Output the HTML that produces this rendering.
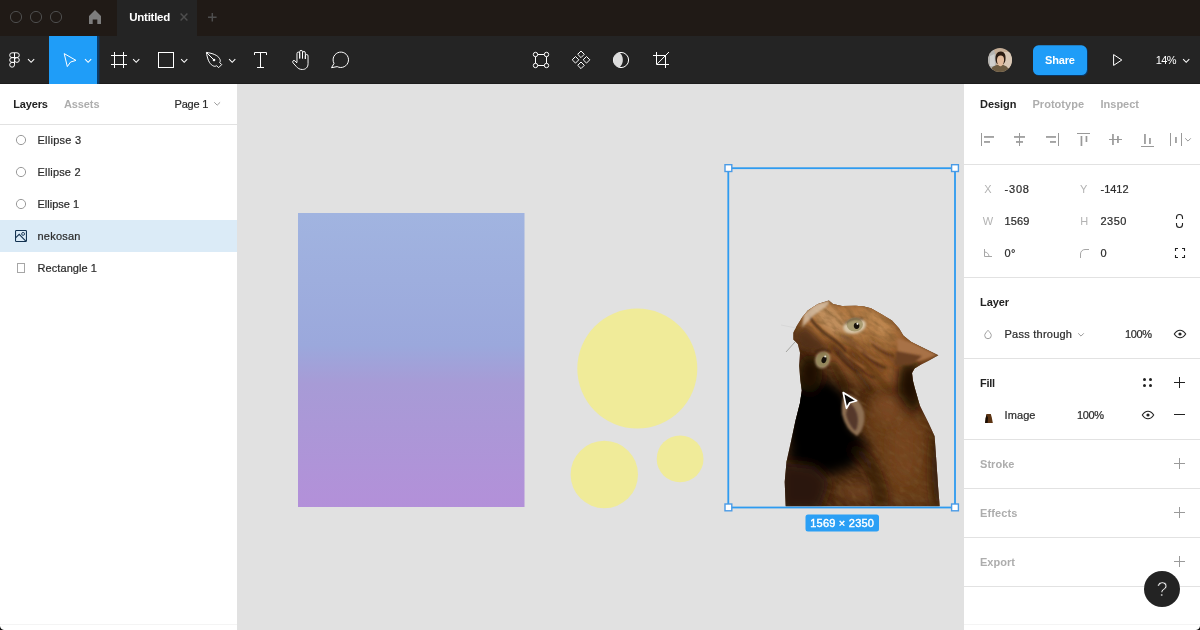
<!DOCTYPE html>
<html lang="en">
<head>
<meta charset="utf-8">
<title>Untitled – Figma</title>
<style>
*{box-sizing:border-box;margin:0;padding:0}
html,body{width:1200px;height:630px;overflow:hidden;background:#e1e1e1;font-family:"Liberation Sans",sans-serif;font-size:11px;color:#333}
body{position:relative}
.t{position:absolute;white-space:nowrap;line-height:16px;height:16px}
#txt{position:absolute;left:0;top:0;width:1200px;height:630px;will-change:transform}
#gfx{position:absolute;left:0;top:0;width:1200px;height:630px}
</style>
</head>
<body>
<svg id="gfx" width="1200" height="630" viewBox="0 0 1200 630">
<defs>
  <linearGradient id="gr" x1="0" y1="0" x2="0" y2="1">
    <stop offset="0" stop-color="#a1b4e0"/>
    <stop offset="0.45" stop-color="#9ba8dc"/>
    <stop offset="0.58" stop-color="#a79bd6"/>
    <stop offset="1" stop-color="#b390d9"/>
  </linearGradient>
  <clipPath id="avclip"><circle cx="1000" cy="60" r="12"/></clipPath>
</defs>
<!-- canvas -->
<rect x="0" y="0" width="1200" height="630" fill="#e1e1e1"/>
<rect x="298" y="213" width="226.5" height="294" fill="url(#gr)"/>
<circle cx="637.3" cy="368.6" r="60" fill="#f0eb99"/>
<circle cx="604.3" cy="474.5" r="33.7" fill="#f0eb99"/>
<circle cx="680.1" cy="458.9" r="23.4" fill="#f0eb99"/>
<defs>
  <clipPath id="catclip">
    <path id="catpath" d="M828.9 300.6 L833 304 L842 306 L856 305.8 L864 306.6 L871 308.3 L882 314.4 L892 320.6 L899 328.3 L903.3 335.6 L911 341.7 L922 347.2 L938.4 355.2 L929 360.6 L921 364.5 L914.5 368.5 L912 373 L913 381 L914.8 388 L919.9 405.8 L928.8 423.6 L934.6 436.3 L936.4 461.7 L938.1 487 L939.7 506.3 L785.7 506.3 L784.7 482 L786.5 461.7 L791.6 438.8 L795.4 421 L800 403 L801.8 390.6 L800.3 380 L799.2 366 L800 352.8 L797.8 343.9 L793.3 339.4 L793.3 332.8 L796.7 326.1 L802.2 317.2 L807.8 310.6 L817.8 303.9 Z"/>
  </clipPath>
  <filter id="b3" filterUnits="userSpaceOnUse" x="740" y="260" width="240" height="290"><feGaussianBlur stdDeviation="3"/></filter>
  <filter id="b6" filterUnits="userSpaceOnUse" x="740" y="260" width="240" height="290"><feGaussianBlur stdDeviation="6"/></filter>
  <filter id="b1" filterUnits="userSpaceOnUse" x="740" y="260" width="240" height="290"><feGaussianBlur stdDeviation="1.2"/></filter>
  <filter id="b05" filterUnits="userSpaceOnUse" x="740" y="260" width="240" height="290"><feGaussianBlur stdDeviation="0.6"/></filter>
  <filter id="fur" x="0" y="0" width="100%" height="100%">
    <feTurbulence type="fractalNoise" baseFrequency="0.09 0.22" numOctaves="3" seed="7" result="n"/>
    <feColorMatrix in="n" type="matrix" values="0 0 0 0 0.16  0 0 0 0 0.08  0 0 0 0 0.02  1.9 0 0 0 -0.72"/>
  </filter>
  <filter id="fur2" x="0" y="0" width="100%" height="100%">
    <feTurbulence type="fractalNoise" baseFrequency="0.12 0.25" numOctaves="2" seed="23" result="n"/>
    <feColorMatrix in="n" type="matrix" values="0 0 0 0 0.85  0 0 0 0 0.6  0 0 0 0 0.36  0 1.6 0 0 -0.78"/>
  </filter>
</defs>
<g clip-path="url(#catclip)">
  <rect x="780" y="295" width="165" height="215" fill="#4a280e"/>
  <!-- head lit area -->
  <path d="M805 305 L870 300 L905 330 L940 355 L915 370 L893 392 L860 383 L835 368 L810 345 L795 340 Z" fill="#955a2c" filter="url(#b6)"/>
  <path d="M808 304 L860 303 L888 316 L902 340 L880 352 L850 342 L820 332 L800 322 Z" fill="#b27a44" filter="url(#b6)"/>
  <path d="M860 308 L878 314 L894 328 L882 336 L866 322 Z" fill="#bd8650" filter="url(#b3)"/>
  <path d="M812 309 L830 303 L845 322 L850 338 L838 338 L822 326 Z" fill="#c08e5c" filter="url(#b3)"/>
  <!-- body right lit -->
  <path d="M872 395 L912 388 L932 436 L937 506 L888 506 L876 462 L862 425 Z" fill="#683a18" filter="url(#b6)"/>
  <ellipse cx="904" cy="448" rx="15" ry="36" fill="#74421c" filter="url(#b6)"/>
  <ellipse cx="858" cy="492" rx="20" ry="10" fill="#6a3d1b" filter="url(#b6)"/>
  <ellipse cx="888" cy="408" rx="13" ry="16" fill="#7a4720" filter="url(#b6)"/>
  <!-- texture -->
  <rect x="720" y="260" width="280" height="290" filter="url(#fur)" opacity="0.6" transform="rotate(35 860 400)"/>
  <rect x="720" y="260" width="280" height="290" filter="url(#fur2)" opacity="0.1" transform="rotate(35 860 400)"/>
  <!-- shadows -->
  <path d="M793 390 L803 384 L828 380 L845 394 L848 425 L868 446 L852 468 L824 476 L788 462 Z" fill="#040201" filter="url(#b6)"/>
  <path d="M797 395 L826 388 L842 400 L844 428 L856 444 L840 455 L815 454 L795 440 Z" fill="#030100" filter="url(#b3)"/>
  <ellipse cx="810" cy="374" rx="12" ry="19" fill="#1f1006" filter="url(#b6)"/>
  <path d="M780 462 L815 466 L830 482 L820 510 L780 510 Z" fill="#2c180a" filter="url(#b6)"/>
  <path d="M900 364 L918 361 L922 396 L914 416 L897 392 Z" fill="#1e1006" filter="url(#b6)"/>
  <ellipse cx="938" cy="470" rx="6" ry="40" fill="#331b0a" filter="url(#b6)"/>
  <path d="M852 448 Q876 460 882 505" stroke="#2a1608" stroke-width="8" fill="none" filter="url(#b6)"/>
  <!-- fur wrinkles -->
  <path d="M830 345 Q850 360 872 392" stroke="#351c0c" stroke-width="4.5" fill="none" filter="url(#b3)"/>
  <path d="M848 350 Q872 368 890 392" stroke="#42240f" stroke-width="3.5" fill="none" filter="url(#b3)"/>
  <path d="M838 334 Q862 346 884 372" stroke="#553015" stroke-width="3" fill="none" filter="url(#b3)"/>
  <path d="M866 338 Q884 348 898 366" stroke="#5a3316" stroke-width="2.5" fill="none" filter="url(#b3)"/>
  <path d="M832 362 Q842 376 846 392" stroke="#2a1508" stroke-width="4" fill="none" filter="url(#b3)"/>
  <path d="M836 352 Q846 366 858 372 M850 358 Q860 372 874 378 M862 352 Q872 364 886 368 M872 344 Q882 354 894 356" stroke="#3a1f0d" stroke-width="1.4" fill="none" filter="url(#b1)" opacity="0.8"/>
  <path d="M842 350 Q852 362 866 368 M856 346 Q868 358 882 362 M866 336 Q878 348 892 350" stroke="#c08a55" stroke-width="1.2" fill="none" filter="url(#b1)" opacity="0.55"/>
  <!-- mouth line -->
  <path d="M808 314 Q815 328 834 340 Q842 346 846 352" stroke="#4a2a14" stroke-width="2.2" fill="none" filter="url(#b1)"/>
  <!-- lower ear -->
  <path d="M845 394 Q859 395 864 412 Q866 428 857 436 Q846 430 842 414 Q841 401 845 394 Z" fill="#8e6f52" filter="url(#b1)"/>
  <path d="M849 402 Q857 408 858 419 Q858 428 855 431 Q848 424 846 414 Z" fill="#54392a" filter="url(#b1)"/>
  <!-- upper ear -->
  <path d="M897 338 L912 343 L937 355 L920 361 L898 361 Z" fill="#a87246" filter="url(#b1)"/>
  <path d="M896 351 L922 356 L913 364 L895 366 Z" fill="#6b4122" filter="url(#b1)"/>
  <!-- eyes -->
  <ellipse cx="854.5" cy="326" rx="11.5" ry="7.6" fill="#d8c6a8" transform="rotate(-14 854.5 326)" filter="url(#b1)"/>
  <ellipse cx="854.8" cy="324.6" rx="8.2" ry="6.9" fill="#a99c72" filter="url(#b05)"/>
  <path d="M845 324 Q851 316.5 863 319.5" stroke="#4a2e18" stroke-width="1.6" fill="none" filter="url(#b1)" opacity="0.75"/>
  <ellipse cx="856.6" cy="325.8" rx="2.8" ry="3.1" fill="#17110a"/>
  <circle cx="857.5" cy="323.8" r="1.1" fill="#f4f0e6"/>
  <ellipse cx="822.6" cy="359.6" rx="7.4" ry="9" fill="#c4ae8c" transform="rotate(18 822.6 359.6)" filter="url(#b1)" opacity="0.75"/>
  <ellipse cx="822.8" cy="359.5" rx="6.2" ry="7.6" fill="#94875c" transform="rotate(18 822.8 359.5)" filter="url(#b05)"/>
  <ellipse cx="824" cy="359.8" rx="2.4" ry="3.4" fill="#15100a" transform="rotate(18 824 359.8)"/>
  <circle cx="825.2" cy="356.6" r="1" fill="#efe9dc"/>
  <path d="M814.5 352.5 Q822 346.5 830.5 352" stroke="#2e190b" stroke-width="2" fill="none" filter="url(#b1)" opacity="0.8"/>
  <!-- nose/muzzle highlight -->
  <path d="M804 314 L816 304 L830 300.5 L827 306 L813 316 L802 328 Z" fill="#d9c3aa" filter="url(#b1)" opacity="0.8"/>
  <path d="M795 334 L806 326 L818 338 L830 348 L818 352 L800 348 Z" fill="#4a2a12" filter="url(#b3)" opacity="0.8"/>
</g>
<path d="M796 328 L781 325" stroke="#d0d0d0" stroke-width="0.6" fill="none"/>
<path d="M795 342 L786 352" stroke="#8a8a84" stroke-width="0.7" fill="none"/>

<!-- selection -->
<rect x="728.3" y="168.2" width="226.7" height="339.3" fill="none" stroke="#2e9bf0" stroke-width="1.8"/>
<g fill="#fff" stroke="#4a9be6" stroke-width="1.4">
  <rect x="725" y="164.7" width="6.8" height="6.8"/>
  <rect x="951.6" y="164.7" width="6.8" height="6.8"/>
  <rect x="725" y="504" width="6.8" height="6.8"/>
  <rect x="951.6" y="504" width="6.8" height="6.8"/>
</g>
<rect x="805.5" y="514.5" width="73.5" height="17" rx="2.5" fill="#2b9ff5"/>
<!-- cursor -->
<path d="M843.2 392.6 L856.6 400.7 L849.8 402.8 L846.5 408.3 Z" fill="#0a0705" stroke="#fff" stroke-width="1.7" stroke-linejoin="round"/>

<!-- left panel -->
<rect x="0" y="84" width="237" height="546" fill="#fff"/>
<rect x="0" y="124" width="237" height="1" fill="#e2e2e2"/>
<rect x="0" y="220" width="237" height="32" fill="#dbebf7"/>
<g fill="none" stroke="#9a9a9a" stroke-width="1">
  <circle cx="21" cy="140" r="4.6"/>
  <circle cx="21" cy="172" r="4.6"/>
  <circle cx="21" cy="204" r="4.6"/>
  <rect x="17.5" y="263.5" width="7" height="9" stroke="#a6a6a6"/>
  <path d="M214.3 102.3 L217.2 105.2 L220.1 102.3"/>
</g>
<g fill="none" stroke="#11304f" stroke-width="1.05">
  <rect x="15.55" y="230.55" width="10.9" height="10.9" rx="0.8"/>
  <circle cx="23.1" cy="233.9" r="1.45" stroke-width="0.9"/>
  <path d="M15.8 237.6 L19.2 234.3 L25.8 241.2"/>
</g>

<!-- right panel -->
<rect x="964" y="84" width="236" height="546" fill="#fff"/>
<g fill="#e2e2e2">
  <rect x="964" y="164" width="236" height="1"/>
  <rect x="964" y="277" width="236" height="1"/>
  <rect x="964" y="358" width="236" height="1"/>
  <rect x="964" y="439" width="236" height="1"/>
  <rect x="964" y="488" width="236" height="1"/>
  <rect x="964" y="537" width="236" height="1"/>
  <rect x="964" y="586" width="236" height="1"/>
</g>
<!-- align icons -->
<g fill="#999">
  <rect x="981" y="133" width="1" height="13"/>
  <rect x="984" y="136.1" width="10" height="1.7"/>
  <rect x="984" y="141.1" width="6" height="1.7"/>

  <rect x="1019" y="133" width="1" height="13"/>
  <rect x="1014" y="136.1" width="11" height="1.7"/>
  <rect x="1016" y="141.1" width="7" height="1.7"/>

  <rect x="1058" y="133" width="1" height="13"/>
  <rect x="1046" y="136.1" width="10" height="1.7"/>
  <rect x="1050" y="141.1" width="6" height="1.7"/>

  <rect x="1077" y="133" width="13" height="1"/>
  <rect x="1080.6" y="136" width="1.7" height="10"/>
  <rect x="1085.6" y="136" width="1.7" height="6"/>

  <rect x="1109" y="139" width="13" height="1"/>
  <rect x="1112.1" y="134" width="1.7" height="11"/>
  <rect x="1117.1" y="136" width="1.7" height="7"/>

  <rect x="1141" y="146" width="13" height="1"/>
  <rect x="1144.1" y="134" width="1.7" height="10"/>
  <rect x="1149.1" y="138" width="1.7" height="6"/>

  <rect x="1170" y="133" width="1" height="13"/>
  <rect x="1181" y="133" width="1" height="13"/>
  <rect x="1175.1" y="137" width="1.7" height="6"/>
</g>
<path d="M1185.2 138.3 L1188 141.1 L1190.8 138.3" fill="none" stroke="#999" stroke-width="1"/>
<!-- constrain proportions -->
<g fill="none" stroke="#222" stroke-width="1.1">
  <path d="M1176.5 219 V217.5 a3 3 0 0 1 6 0 V219"/>
  <path d="M1176.5 223 V224.5 a3 3 0 0 0 6 0 V223"/>
</g>
<!-- rotation -->
<g fill="none" stroke="#a6a6a6" stroke-width="1">
  <path d="M984.5 249 V256.5 H992"/>
  <path d="M984.5 252 A4.5 4.5 0 0 1 989 256.5"/>
  <path d="M1080.5 258 V254 A4.5 4.5 0 0 1 1085 249.5 H1089"/>
</g>
<!-- independent corners -->
<path d="M1175.5 251 V248.5 H1178 M1182 248.5 H1184.5 V251 M1184.5 255 V257.5 H1182 M1178 257.5 H1175.5 V255" fill="none" stroke="#222" stroke-width="1.1"/>
<!-- drop -->
<path d="M988 330.3 C986.4 332.1 984.7 333.8 984.7 335.4 a3.3 3.3 0 0 0 6.6 0 C991.3 333.8 989.6 332.1 988 330.3 Z" fill="none" stroke="#a0a0a0" stroke-width="1"/>
<path d="M1078.2 333.3 L1081 336.1 L1083.8 333.3" fill="none" stroke="#9a9a9a" stroke-width="1"/>
<!-- eyes -->
<g fill="none" stroke="#222" stroke-width="1.1">
  <path d="M1174.3 334 C1176 331.3 1178 330.2 1180 330.2 C1182 330.2 1184 331.3 1185.7 334 C1184 336.7 1182 337.8 1180 337.8 C1178 337.8 1176 336.7 1174.3 334 Z"/>
  <path d="M1142.3 415 C1144 412.3 1146 411.2 1148 411.2 C1150 411.2 1152 412.3 1153.7 415 C1152 417.7 1150 418.8 1148 418.8 C1146 418.8 1144 417.7 1142.3 415 Z"/>
</g>
<circle cx="1180" cy="334" r="1.6" fill="#222"/>
<circle cx="1148" cy="415" r="1.6" fill="#222"/>
<!-- fill dots / plus / minus -->
<g fill="#222">
  <circle cx="1144.5" cy="379.5" r="1.5"/>
  <circle cx="1150.5" cy="379.5" r="1.5"/>
  <circle cx="1144.5" cy="385.5" r="1.5"/>
  <circle cx="1150.5" cy="385.5" r="1.5"/>
  <rect x="1174" y="382" width="11" height="1"/>
  <rect x="1179" y="377" width="1" height="11"/>
  <rect x="1174" y="414" width="11" height="1"/>
</g>
<g fill="#9a9a9a">
  <rect x="1174" y="463" width="11" height="1"/>
  <rect x="1179" y="458" width="1" height="11"/>
  <rect x="1174" y="512" width="11" height="1"/>
  <rect x="1179" y="507" width="1" height="11"/>
  <rect x="1174" y="561" width="11" height="1"/>
  <rect x="1179" y="556" width="1" height="11"/>
</g>
<!-- fill thumbnail -->
<path d="M986.4 413.9 L990.8 414 L991.8 417.5 L992.8 422.9 L985.1 422.9 L985.6 418.5 Z" fill="#5c3413"/>
<path d="M985.1 422.9 L985.6 418.5 L986.4 415 L988 417.6 L987.6 422.9 Z" fill="#180c04"/>
<rect x="0" y="624" width="237" height="1" fill="#f4f4f4"/>
<rect x="964" y="624" width="236" height="1" fill="#f4f4f4"/>
<path d="M0 626 Q0.5 629.5 4 630 H0 Z" fill="#111"/>
<path d="M1200 626 Q1199.5 629.5 1196 630 H1200 Z" fill="#111"/>
<!-- help -->
<circle cx="1162" cy="589" r="18" fill="#232323"/>

<!-- title bar -->
<rect x="0" y="0" width="1200" height="36" fill="#201a16"/>
<rect x="117" y="0" width="80" height="36" fill="#242424"/>
<g fill="none" stroke="#4d4d4d" stroke-width="1">
  <circle cx="16" cy="17" r="5.6"/>
  <circle cx="36" cy="17" r="5.6"/>
  <circle cx="56" cy="17" r="5.6"/>
</g>
<path d="M95 10 L101 16 V24 H97.3 V19.5 H92.7 V24 H89 V16 Z" fill="#7d7d7d"/>
<path d="M180.6 13.6 L187.4 20.4 M187.4 13.6 L180.6 20.4" stroke="#4e4e4e" stroke-width="1.45" fill="none"/>
<path d="M208 17.2 H216.6 M212.3 12.9 V21.5" stroke="#4e4e4e" stroke-width="1.45" fill="none"/>

<!-- toolbar -->
<rect x="0" y="36" width="1200" height="48" fill="#242424"/>
<rect x="0" y="83" width="1200" height="1" fill="#1c1c1c"/>
<rect x="49" y="36" width="48" height="48" fill="#1f9df8"/>
<rect x="97" y="36" width="2.4" height="48" fill="#0d3a66"/>
<g fill="none" stroke="#fff" stroke-width="1">
  <!-- figma logo -->
  <path d="M14.5 52.8 H12.1 a2.4 2.4 0 0 0 0 4.8 H14.5 Z"/>
  <path d="M14.5 52.8 H16.9 a2.4 2.4 0 0 1 0 4.8 H14.5 Z"/>
  <path d="M14.5 57.6 H12.1 a2.4 2.4 0 0 0 0 4.8 H14.5 Z"/>
  <circle cx="16.9" cy="60" r="2.4"/>
  <path d="M14.5 62.4 H12.1 a2.4 2.4 0 1 0 2.4 2.4 Z"/>
  <!-- chevrons -->
  <g stroke-width="1.05">
  <path d="M28 59.2 L31.1 62.3 L34.2 59.2"/>
  <path d="M85 59.2 L88.1 62.3 L91.2 59.2"/>
  <path d="M133.1 59.2 L136.2 62.3 L139.3 59.2"/>
  <path d="M181.1 59.2 L184.2 62.3 L187.3 59.2"/>
  <path d="M229.1 59.2 L232.2 62.3 L235.3 59.2"/>
  <path d="M1183.1 59.2 L1186.2 62.3 L1189.3 59.2"/>
  </g>
  <!-- move -->
  <path d="M64.2 53.6 L76 60.4 L70.6 62 L67.3 66.6 Z" stroke-linejoin="round"/>
  <!-- frame -->
  <path d="M114.5 52 V68 M123.5 52 V68 M111 55.5 H127 M111 64.5 H127"/>
  <!-- rect -->
  <rect x="158.5" y="52.5" width="15" height="15"/>
  <!-- pen -->
  <path d="M219.7 62.6 C220.6 61.4 220.4 60 219.6 58.6 C217.6 55.2 213 53.4 206.4 52.4 C207.4 59 209.2 63.6 212.6 65.6 C214 66.4 215.4 66.6 216.6 65.7" stroke-linejoin="round"/>
  <path d="M219.7 62.6 L221.7 64.6 L218.6 67.7 L216.6 65.7"/>
  <path d="M206.6 52.6 L213.4 59.4"/>
  <!-- text -->
  <path d="M254.5 55 V52.5 H266.5 V55 M260.5 52.5 V67.5 M257 67.5 H264"/>
  <!-- hand -->
  <path transform="translate(300.6 0) scale(0.91 1) translate(-300.6 0)" d="M296.6 62.5 V53.6 a1.5 1.5 0 0 1 3 0 V58.5 M299.6 58.5 V51.9 a1.55 1.55 0 0 1 3.1 0 V58.5 M302.7 58.5 V53 a1.55 1.55 0 0 1 3.1 0 V59 M305.8 59 V56 a1.5 1.5 0 0 1 3 0 V63.5 C308.8 67.5 306 69.5 302.5 69.5 C299.3 69.5 297.6 68.2 296 66.6 L292.3 62.9 a1.45 1.45 0 0 1 2.05 -2.05 L296.6 63"/>
  <!-- comment -->
  <path d="M337.2 66.6 A7.7 7.7 0 1 0 334 63.4 L331.5 67.7 Z" stroke-linejoin="round"/>
  <!-- edit object -->
  <circle cx="535.5" cy="54.5" r="2.2"/>
  <circle cx="546.5" cy="54.5" r="2.2"/>
  <circle cx="535.5" cy="65.5" r="2.2"/>
  <circle cx="546.5" cy="65.5" r="2.2"/>
  <path d="M537.7 54.5 H544.3 M537.7 65.5 H544.3 M535.5 56.7 V63.3 M546.5 56.7 V63.3"/>
  <!-- component -->
  <path d="M581 51 L584.3 54.3 L581 57.6 L577.7 54.3 Z"/>
  <path d="M581 62 L584.3 65.3 L581 68.6 L577.7 65.3 Z"/>
  <path d="M575.5 56.5 L578.8 59.8 L575.5 63.1 L572.2 59.8 Z"/>
  <path d="M586.5 56.5 L589.8 59.8 L586.5 63.1 L583.2 59.8 Z"/>
  <!-- mask -->
  <circle cx="621" cy="60" r="7.6"/>
  <!-- crop -->
  <path d="M656.5 52 V64.5 H669 M653 55.5 H665.5 V68 M657.3 63.8 L669 52"/>
  <!-- play -->
  <path d="M1113.6 54.6 L1121.8 60 L1113.6 65.4 Z" stroke-linejoin="round"/>
</g>
<circle cx="214" cy="60" r="1.3" fill="#fff"/>
<path d="M619.5 52.55 A7.6 7.6 0 0 0 619.5 67.45 A10 10 0 0 0 619.5 52.55 Z" fill="#dcdcdc"/>
<!-- avatar -->
<g clip-path="url(#avclip)">
  <rect x="988" y="48" width="24" height="24" fill="#c4ad96"/>
  <rect x="1004" y="52" width="8" height="16" fill="#d9c8b6"/>
  <path d="M988 50 L994 50 L996 56 L996 70 L988 70 Z" fill="#b4b4b2"/>
  <path d="M990 56 L994.5 54 L995 66 L990 66 Z" fill="#d0d0ce"/>
  <path d="M990.5 72 C991 66.5 995 64.6 1000 65.2 C1004.5 64.4 1008 66 1009.5 72 Z" fill="#6d5c42"/>
  <path d="M995.6 60.5 C994.8 54.5 997.5 51.4 1001 51.6 C1004.6 51.8 1006.2 55 1005.4 60.5 C1005 62.5 1004 63.5 1003.4 64 L997.4 64 C996.4 63 995.8 62 995.6 60.5 Z" fill="#2b1c12"/>
  <path d="M997 59.5 C997.2 56.6 999 55.2 1001.2 55.6 C1003.4 56 1004.2 57.8 1004 60.4 C1003.8 63.4 1002.4 66.2 1000.4 66.2 C998.4 66.2 996.8 63 997 59.5 Z" fill="#e2bb9c"/>
</g>
<!-- share -->
<rect x="1034" y="46.3" width="54" height="29.7" rx="5.5" fill="#0c3560"/>
<rect x="1033" y="45.3" width="54" height="29.7" rx="5.5" fill="#1f9df8"/>
</svg>

<div id="txt">
<span class="t" style="left:129.30px;top:9.00px;color:#ffffff;font-size:11.5px;font-weight:bold;letter-spacing:-0.259px;">Untitled</span>
<span class="t" style="left:1045.00px;top:52.00px;color:#ffffff;font-size:11px;font-weight:bold;letter-spacing:-0.145px;">Share</span>
<span class="t" style="left:1155.68px;top:52.30px;color:#ffffff;font-size:11px;letter-spacing:-0.600px;">14%</span>
<span class="t" style="left:13.30px;top:96.00px;color:#222222;font-size:11px;font-weight:bold;letter-spacing:-0.157px;">Layers</span>
<span class="t" style="left:64.00px;top:96.00px;color:#adadad;font-size:11px;font-weight:bold;letter-spacing:-0.116px;">Assets</span>
<span class="t" style="left:174.50px;top:96.00px;color:#2c2c2c;font-size:11px;-webkit-text-stroke:0.22px #2c2c2c;letter-spacing:-0.175px;">Page 1</span>
<span class="t" style="left:37.50px;top:132.00px;color:#2c2c2c;font-size:11px;-webkit-text-stroke:0.22px #2c2c2c;letter-spacing:0.240px;">Ellipse 3</span>
<span class="t" style="left:37.50px;top:164.00px;color:#2c2c2c;font-size:11px;-webkit-text-stroke:0.22px #2c2c2c;letter-spacing:0.178px;">Ellipse 2</span>
<span class="t" style="left:37.50px;top:196.00px;color:#2c2c2c;font-size:11px;-webkit-text-stroke:0.22px #2c2c2c;letter-spacing:-0.010px;">Ellipse 1</span>
<span class="t" style="left:37.50px;top:228.00px;color:#2c2c2c;font-size:11px;-webkit-text-stroke:0.22px #2c2c2c;letter-spacing:0.234px;">nekosan</span>
<span class="t" style="left:37.50px;top:260.00px;color:#2c2c2c;font-size:11px;-webkit-text-stroke:0.22px #2c2c2c;letter-spacing:0.078px;">Rectangle 1</span>
<span class="t" style="left:980.00px;top:96.00px;color:#222222;font-size:11px;font-weight:bold;letter-spacing:-0.037px;">Design</span>
<span class="t" style="left:1032.50px;top:96.00px;color:#adadad;font-size:11px;font-weight:bold;letter-spacing:0.020px;">Prototype</span>
<span class="t" style="left:1100.50px;top:96.00px;color:#adadad;font-size:11px;font-weight:bold;">Inspect</span>
<span class="t" style="left:984.33px;top:181.00px;color:#b3b3b3;font-size:11px;">X</span>
<span class="t" style="left:1004.50px;top:181.00px;color:#2c2c2c;font-size:11px;-webkit-text-stroke:0.22px #2c2c2c;letter-spacing:0.823px;">-308</span>
<span class="t" style="left:1080.08px;top:181.00px;color:#b3b3b3;font-size:11px;">Y</span>
<span class="t" style="left:1100.50px;top:181.00px;color:#2c2c2c;font-size:11px;-webkit-text-stroke:0.22px #2c2c2c;letter-spacing:-0.035px;">-1412</span>
<span class="t" style="left:982.80px;top:213.00px;color:#b3b3b3;font-size:11px;">W</span>
<span class="t" style="left:1004.50px;top:213.00px;color:#2c2c2c;font-size:11px;-webkit-text-stroke:0.22px #2c2c2c;letter-spacing:0.172px;">1569</span>
<span class="t" style="left:1080.27px;top:213.00px;color:#b3b3b3;font-size:11px;">H</span>
<span class="t" style="left:1100.50px;top:213.00px;color:#2c2c2c;font-size:11px;-webkit-text-stroke:0.22px #2c2c2c;letter-spacing:0.505px;">2350</span>
<span class="t" style="left:1004.50px;top:245.00px;color:#2c2c2c;font-size:11px;-webkit-text-stroke:0.22px #2c2c2c;letter-spacing:0.469px;">0°</span>
<span class="t" style="left:1100.44px;top:245.00px;color:#2c2c2c;font-size:11px;-webkit-text-stroke:0.22px #2c2c2c;">0</span>
<span class="t" style="left:980.00px;top:294.00px;color:#222222;font-size:11px;font-weight:bold;letter-spacing:-0.090px;">Layer</span>
<span class="t" style="left:1004.50px;top:326.00px;color:#2c2c2c;font-size:11px;-webkit-text-stroke:0.22px #2c2c2c;letter-spacing:0.243px;">Pass through</span>
<span class="t" style="left:1125.00px;top:326.00px;color:#2c2c2c;font-size:11px;-webkit-text-stroke:0.22px #2c2c2c;letter-spacing:-0.380px;">100%</span>
<span class="t" style="left:980.00px;top:375.00px;color:#222222;font-size:11px;font-weight:bold;letter-spacing:-0.297px;">Fill</span>
<span class="t" style="left:1004.50px;top:407.00px;color:#2c2c2c;font-size:11px;-webkit-text-stroke:0.22px #2c2c2c;letter-spacing:0.105px;">Image</span>
<span class="t" style="left:1077.00px;top:407.00px;color:#2c2c2c;font-size:11px;-webkit-text-stroke:0.22px #2c2c2c;letter-spacing:-0.380px;">100%</span>
<span class="t" style="left:980.00px;top:456.00px;color:#adadad;font-size:11px;font-weight:bold;letter-spacing:0.050px;">Stroke</span>
<span class="t" style="left:980.00px;top:505.00px;color:#adadad;font-size:11px;font-weight:bold;letter-spacing:0.135px;">Effects</span>
<span class="t" style="left:980.00px;top:554.00px;color:#adadad;font-size:11px;font-weight:bold;letter-spacing:0.031px;">Export</span>
<span class="t" style="left:810.20px;top:515.00px;color:#ffffff;font-size:11px;-webkit-text-stroke:0.4px #ffffff;letter-spacing:0.232px;">1569 × 2350</span>
<span class="t" style="left:1156.67px;top:581.30px;color:#ffffff;font-size:19.5px;-webkit-text-stroke:0.65px #232323;">?</span>
</div>
</body>
</html>
